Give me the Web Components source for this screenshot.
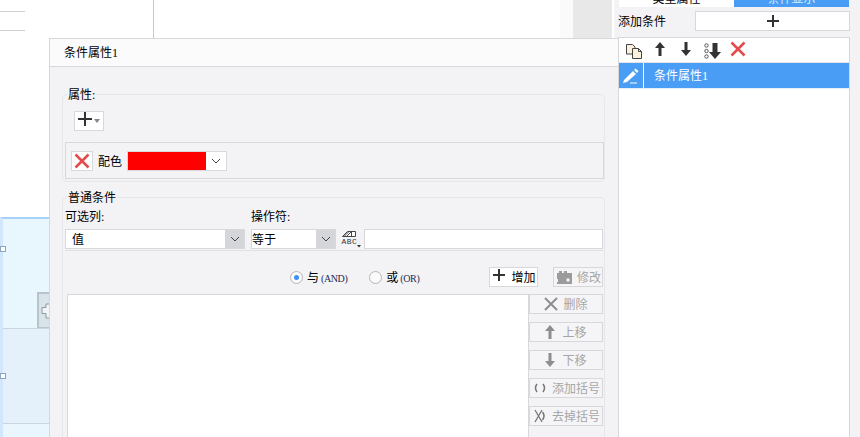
<!DOCTYPE html>
<html lang="zh">
<head>
<meta charset="utf-8">
<title>条件属性</title>
<style>
html, body { margin: 0; padding: 0; overflow: hidden; background: #fff; }
body { font: 12px "Liberation Serif", "Noto Sans CJK SC", sans-serif; color: #000; }
svg { display: block; }
</style>
</head>
<body>
<x-app>
  <x-backdrop></x-backdrop>
  <x-dialog slot="dialog" heading="条件属性1">
    <x-group label="属性:" class="attrs">
      <x-attrs></x-attrs>
    </x-group>
    <x-group label="普通条件" class="cond">
      <x-conditions></x-conditions>
    </x-group>
  </x-dialog>
  <x-panel slot="panel"></x-panel>
</x-app>

<script>
// little helper so each element is just a name + template
function define(name, html, extra) {
  const template = document.createElement('template')
  template.innerHTML = html
  class El extends HTMLElement {
    constructor() {
      super()
      this._shadowRoot = this.attachShadow({ mode: 'open' })
      this._shadowRoot.appendChild(template.content.cloneNode(true))
      if (extra) extra(this)
    }
  }
  customElements.define(name, El)
}

const ICON = {
  plus: '<svg width="14" height="14" viewBox="0 0 14 14"><path d="M0 7h14M7 0v14" stroke="#333" stroke-width="2"/></svg>',
  plus12: '<svg width="12" height="12" viewBox="0 0 12 12"><path d="M0 6h12M6 0v12" stroke="#333" stroke-width="2"/></svg>',
  x: '<svg width="16" height="16" viewBox="0 0 16 16"><path d="M1.500 1.500l13 13M14.500 1.500l-13 13" stroke="#e64b4b" stroke-width="2.500"/></svg>',
  chevron: '<svg width="10" height="6" viewBox="0 0 10 6"><path d="M1 1l4 4 4-4" fill="none" stroke="#444" stroke-width="1"/></svg>',
  up: '<svg width="10" height="14" viewBox="0 0 10 14"><path d="M5 0l5 6H6.500v8h-3V6H0z" fill="#333"/></svg>',
  down: '<svg width="10" height="14" viewBox="0 0 10 14"><path d="M5 14l5-6H6.500V0h-3v8H0z" fill="#333"/></svg>'
}

define('x-app', `
  <style>
    :host { display: grid; grid-template-columns: 612px 248px; width: 860px; height: 437px; overflow: hidden; position: relative; }
    ::slotted(x-dialog) { position: absolute; left: 49px; top: 38px; width: 569px; height: 399px; }
  </style>
  <slot></slot><slot name="dialog"></slot><slot name="panel"></slot>
`)

define('x-backdrop', `
  <style>
    :host { display: flex; flex-direction: column; height: 437px; background: #fff; position: relative; }
    .top { height: 217px; display: flex; flex: none; }
    .rules { width: 25px; height: 20px; margin-top: 11px; box-sizing: border-box; border-top: 1px solid #cfcfcf; border-bottom: 1px solid #cfcfcf; flex: none; }
    .vline { width: 1px; height: 38px; background: #c8c8c8; margin-left: 128px; flex: none; }
    .fill { flex: 1; }
    .soft { width: 13px; height: 38px; background: #fafafa; flex: none; }
    .strip { width: 39px; height: 38px; background: #e8e8e8; flex: none; }
    .blue { flex: 1; display: flex; flex-direction: column; border-top: 2px solid #a6d0f6; border-left: 3px solid #d2e7fb; }
    .a { height: 109px; background: #e8f6fe; border-bottom: 1px solid #c9d4dc; flex: none; }
    .b { height: 94px; background: #e4f1fa; border-bottom: 1px solid #c9d4dc; flex: none; }
    .c { flex: 1; background: #e9f6fd; }
    .pin { position: absolute; left: 0; width: 6px; height: 6px; box-sizing: border-box; border: 1px solid #8aa5c0; background: #fff; }
    .grip { position: absolute; left: 37px; top: 292px; width: 12px; height: 36px; box-sizing: border-box; background: #d9e4ea; border-left: 2px solid #b9c4ca; border-top: 2px solid #b9c4ca; border-bottom: 1px solid #b9c4ca; }
    .grip svg { margin: 9px 0 0 2px; }
  </style>
  <div class="top">
    <div class="rules"></div><div class="vline"></div><div class="fill"></div>
    <div class="soft"></div><div class="strip"></div>
  </div>
  <div class="blue">
    <div class="a"></div><div class="b"></div><div class="c"></div>
  </div>
  <div class="pin" style="top:246px"></div>
  <div class="pin" style="top:373px"></div>
  <div class="grip"><svg width="10" height="16" viewBox="0 0 10 16"><path d="M8 1H5v3.500H1v6h4V15h3" fill="#f1f5f7" stroke="#8d9aa3"/></svg></div>
`)

define('x-dialog', `
  <style>
    :host { display: flex; flex-direction: column; box-sizing: border-box; border-left: 1px solid #d8d8db; border-top: 1px solid #d8d8db; background: #f3f3f6; overflow: hidden; }
    .title { flex: none; height: 27px; box-sizing: border-box; line-height: 29px; padding-left: 14px; background: #fbfbfb; }
    .rule { flex: none; height: 1px; background: #d8d8db; }
    .body { flex: 1; padding: 27px 13px 0 12px; display: flex; flex-direction: column; gap: 15px; }
  </style>
  <div class="title" id="t"></div>
  <div class="rule"></div>
  <div class="body"><slot></slot></div>
`, el => { el._shadowRoot.getElementById('t').textContent = el.getAttribute('heading') })

define('x-group', `
  <style>
    :host { display: block; position: relative; box-sizing: border-box; border: 1px solid #e6e6ea; border-radius: 5px; }
    :host(.attrs) { height: 88px; flex: none; }
    :host(.cond) { flex: 1; border-bottom: 0; border-radius: 5px 5px 0 0; }
    .legend { position: absolute; left: 4px; top: -9px; line-height: 18px; padding: 0 1px; background: #f3f3f6; }
  </style>
  <div class="legend" id="l"></div>
  <slot></slot>
`, el => { el._shadowRoot.getElementById('l').textContent = el.getAttribute('label') })

define('x-btn', `
  <style>
    :host { display: inline-flex; align-items: center; justify-content: center; gap: var(--gap, 5px); height: 20px; box-sizing: border-box; border: 1px solid #d8d8db; background: #fff; white-space: nowrap; flex: none; }
    :host([disabled]) { background: #f5f5f7; color: #a6a6a6; }
  </style>
  <slot name="icon"></slot><slot></slot>
`)

define('x-select', `
  <style>
    :host { display: flex; height: 20px; box-sizing: border-box; border: 1px solid #d8d8db; background: #fff; align-items: stretch; flex: none; }
    .v { flex: 1; line-height: 21px; padding-left: var(--pad, 0); }
    .a { width: var(--arrow-w, 19px); display: flex; align-items: center; justify-content: center; background: var(--arrow-bg, #d5d6d9); }
  </style>
  <div class="v"><slot></slot></div>
  <div class="a">${ICON.chevron}</div>
`)

define('x-radio', `
  <style>
    :host { display: inline-flex; align-items: center; gap: 4px; flex: none; }
    .dot { width: 13px; height: 13px; box-sizing: border-box; border-radius: 50%; border: 1px solid #b5b5b8; background: #fbfbfb; display: flex; align-items: center; justify-content: center; }
    :host([checked]) .dot::after { content: ""; width: 5px; height: 5px; border-radius: 50%; background: #3f8ff5; }
  </style>
  <span class="dot"></span><span><slot></slot></span>
`)

define('x-attrs', `
  <style>
    :host { display: block; padding-top: 16px; }
    .add { width: 30px; margin-left: 11px; --gap: 2px; }
    .row { margin: 11px 0 0 2px; width: 539px; height: 37px; box-sizing: border-box; border: 1px solid #d8d8db; display: flex; align-items: center; padding-left: 5px; }
    .del { width: 22px; }
    .name { margin: 0 5px 0 5px; }
    .color { width: 100px; --arrow-bg: #fff; --arrow-w: 20px; }
    .swatch { height: 100%; background: #f00; }
    .tri { display: block; width: 0; height: 0; border: 3px solid transparent; border-top: 4px solid #888; border-bottom: 0; }
  </style>
  <x-btn class="add"><span slot="icon">${ICON.plus}</span><span class="tri"></span></x-btn>
  <div class="row">
    <x-btn class="del">${ICON.x}</x-btn>
    <span class="name">配色</span>
    <x-select class="color"><div class="swatch"></div></x-select>
  </div>
`)

define('x-conditions', `
  <style>
    :host { display: block; padding: 11px 1px 0 2px; }
    .labels { display: flex; height: 20px; line-height: 16px; }
    .labels span:first-child { width: 186px; }
    .fields { display: flex; height: 20px; align-items: stretch; border-bottom: 1px solid #e0e0e3; padding-bottom: 1px; }
    .col { width: 180px; margin-right: 6px; --pad: 6px; }
    .op { width: 85px; }
    .abc { width: 28px; flex: none; display: flex; justify-content: center; font-family: "Liberation Mono", monospace; }
    .input { flex: 1; border: 1px solid #d8d8db; background: #fff; }
    .actions { display: flex; align-items: center; margin-top: 16px; height: 20px; }
    .actions x-radio:first-child { margin-left: 225px; }
    .actions x-radio + x-radio { margin-left: 22px; }
    .latin { font-size: 10px; color: #1d2a55; letter-spacing: -0.4px; margin-left: -1px; }
    .add { width: 49px; margin-left: auto; --gap: 6px; padding-left: 2px; }
    .mod { width: 50px; margin-left: 15px; padding-left: 1px; }
    .main { display: flex; margin: 7px 0 0 2px; }
    .list { width: 462px; height: 200px; box-sizing: border-box; border: 1px solid #d8d8db; border-bottom: 0; background: #fff; flex: none; }
    .side { display: flex; flex-direction: column; gap: 8px; width: 74px; flex: none; }
    .side x-btn { width: 74px; }
    .side .arrow { --gap: 7px; }
    .side .long { --gap: 6px; justify-content: flex-start; padding-left: 4px; }
  </style>
  <div class="labels"><span>可选列:</span><span>操作符:</span></div>
  <div class="fields">
    <x-select class="col">值</x-select>
    <x-select class="op">等于</x-select>
    <div class="abc">
      <svg width="22" height="22" viewBox="0 0 22 22">
        <path d="M3.500 7.500l5-5h8v5z" fill="#fff" stroke="#444"/>
        <path d="M5.500 7l4.500-4.500M8 7l4-4" stroke="#444"/>
        <path d="M12.500 2.500v5" stroke="#444"/>
        <text x="2.500" y="15" font-size="8" letter-spacing="0.500" fill="#333" font-family="Liberation Mono">ABC</text>
        <path d="M18 16h4l-2 2.500z" fill="#333"/>
      </svg>
    </div>
    <div class="input"></div>
  </div>
  <div class="actions">
    <x-radio checked>与 <span class="latin">(AND)</span></x-radio>
    <x-radio>或 <span class="latin">(OR)</span></x-radio>
    <x-btn class="add"><span slot="icon">${ICON.plus12}</span>增加</x-btn>
    <x-btn class="mod" disabled style="--gap:4px"><svg slot="icon" width="17" height="15" viewBox="0 0 17 15"><path d="M1 3h2V1h3v2h2V1h3v2h5v11H1v-2h1V9H1z" fill="#9b9b9b"/><rect x="10" y="8" width="4" height="4" fill="#f5f5f7" stroke="#9b9b9b"/></svg>修改</x-btn>
  </div>
  <div class="main">
    <div class="list"></div>
    <div class="side">
      <x-btn disabled><svg slot="icon" width="14" height="14" viewBox="0 0 14 14"><path d="M1 1l12 12M13 1L1 13" stroke="#8e8e8e" stroke-width="2"/></svg>删除</x-btn>
      <x-btn disabled class="arrow"><svg slot="icon" width="10" height="14" viewBox="0 0 10 14"><path d="M5 0l5 6H6.500v8h-3V6H0z" fill="#8e8e8e"/></svg>上移</x-btn>
      <x-btn disabled class="arrow"><svg slot="icon" width="10" height="14" viewBox="0 0 10 14"><path d="M5 14l5-6H6.500V0h-3v8H0z" fill="#8e8e8e"/></svg>下移</x-btn>
      <x-btn disabled class="long"><svg slot="icon" width="12" height="10" viewBox="0 0 12 10"><path d="M3 1Q0 5 3 9M9 1q3 4 0 8" fill="none" stroke="#777" stroke-width="1.500"/></svg>添加括号</x-btn>
      <x-btn disabled class="long"><svg slot="icon" width="12" height="14" viewBox="0 0 12 14"><path d="M1 1l7 12M8 1L1 13" stroke="#777" stroke-width="1.300"/><path d="M8.500 3q3 4 0 8" fill="none" stroke="#777" stroke-width="1.500"/></svg>去掉括号</x-btn>
    </div>
  </div>
`)

define('x-panel', `
  <style>
    :host { display: flex; flex-direction: column; height: 437px; background: #f3f3f6; margin-left: 2px; }
    .tabs { flex: none; display: flex; height: 7px; margin: 0 11px 0 5px; overflow: hidden; }
    .tab { flex: 1; display: flex; align-items: flex-end; justify-content: center; background: #fff; }
    .tab.on { background: #4a9df5; color: #d9ebff; }
    .tab span { flex: none; line-height: 16px; height: 16px; }
    .add { flex: none; display: flex; align-items: center; height: 20px; margin: 4px 10px 0 4px; }
    .add span { width: 77px; flex: none; }
    .add x-btn { flex: 1; }
    .box { flex: 1; margin: 6px 10px 0 4px; border: 1px solid #d8d8db; border-bottom: 0; background: #fff; display: flex; flex-direction: column; }
    .tools { flex: none; height: 25px; box-sizing: border-box; padding: 2px 0 0 6px; display: flex; align-items: center; border-bottom: 1px solid #e6e6ea; }
    .tools > * { flex: none; }
    .row { flex: none; height: 25px; display: flex; background: #4a9df5; color: #fff; border-bottom: 1px solid #e6eef8; }
    .pen { width: 24px; flex: none; display: flex; align-items: center; justify-content: center; border-right: 1px solid #fff; }
    .txt { padding-left: 10px; line-height: 26px; }
  </style>
  <div class="tabs">
    <div class="tab"><span>类型属性</span></div>
    <div class="tab on"><span>条件显示</span></div>
  </div>
  <div class="add">
    <span>添加条件</span>
    <x-btn>${ICON.plus12}</x-btn>
  </div>
  <div class="box">
    <div class="tools">
      <svg width="18" height="17" viewBox="0 0 18 17" style="margin-right:12px">
        <path d="M1.500 1.500h6l2.500 2.500v7h-8.500z" fill="#fbf2dc" stroke="#444"/>
        <path d="M7.500 5.500h6l3 3v7h-9z" fill="#fbf2dc" stroke="#444"/>
        <path d="M13.500 5.500v3h3" fill="none" stroke="#444"/>
      </svg>
      <span style="margin-right:16px">${ICON.up}</span>
      <span style="margin-right:13px">${ICON.down}</span>
      <svg width="17" height="16" viewBox="0 0 17 16" style="margin-right:9px">
        <circle cx="2.500" cy="2.500" r="1.700" fill="none" stroke="#555"/>
        <circle cx="2.500" cy="8" r="1.700" fill="none" stroke="#555"/>
        <circle cx="2.500" cy="13.500" r="1.700" fill="none" stroke="#555"/>
        <path d="M11 16l6-7h-3.500V0h-5v9H5z" fill="#333"/>
      </svg>
      <span>${ICON.x}</span>
    </div>
    <div class="row">
      <div class="pen">
        <svg width="16" height="16" viewBox="0 0 16 16">
          <path d="M1 12L10 3l3 3-9 8-4 1zM11 2l1.500-1.500 3 2.500L14 5z" fill="#fff"/>
          <path d="M7 15h7" stroke="#fff"/>
        </svg>
      </div>
      <div class="txt">条件属性1</div>
    </div>
  </div>
`)
</script>
</body>
</html>
